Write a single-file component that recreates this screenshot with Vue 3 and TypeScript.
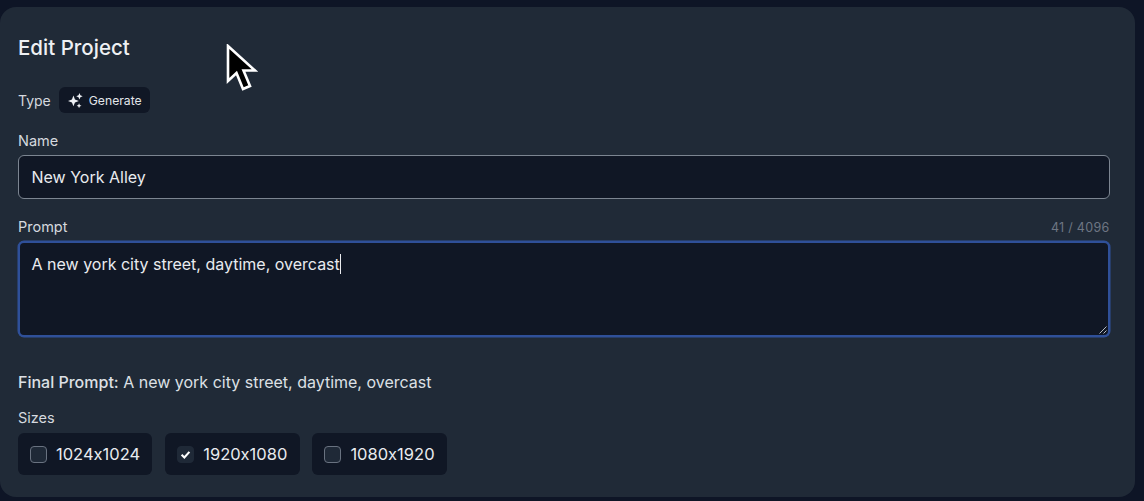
<script setup lang="ts">
const sizes: { label: string; checked: boolean }[] = [
  { label: '1024x1024', checked: false },
  { label: '1920x1080', checked: true },
  { label: '1080x1920', checked: false },
]
</script>

<template>
  <main class="page">
    <section class="panel">
      <h1 class="title">Edit Project</h1>
      <div class="type-row">
        <span class="type-label">Type</span>
        <span class="badge">
          <svg class="spark" viewBox="0 0 16 16" fill="#eef1f5">
            <path d="M5.8 2.6 7.4 6.8 11.6 8.4 7.4 10 5.8 14.2 4.2 10 0 8.4 4.2 6.8Z" />
            <path d="M12.2 0 13.2 2.4 15.6 3.4 13.2 4.4 12.2 6.8 11.2 4.4 8.8 3.4 11.2 2.4Z" />
            <path d="M11.8 11 12.6 12.8 14.4 13.6 12.6 14.4 11.8 16.2 11 14.4 9.2 13.6 11 12.8Z" />
          </svg>
          Generate
        </span>
      </div>

      <div class="label name-label">Name</div>
      <div class="input">New York Alley</div>

      <div class="prompt-head">
        <span class="label">Prompt</span>
        <span class="count">41 / 4096</span>
      </div>
      <div class="textarea">
        <span>A new york city street, daytime, overcast</span><span class="caret"></span>
        <svg class="grip" viewBox="0 0 8 8" fill="none" stroke="#c9ced6" stroke-width="0.9">
          <path d="M0.5 7.5 7.5 0.5M4.5 7.5 7.5 4.5" />
        </svg>
      </div>

      <p class="final"><strong>Final Prompt:</strong> A new york city street, daytime, overcast</p>

      <div class="label sizes-label">Sizes</div>
      <div class="sizes">
        <div v-for="size in sizes" :key="size.label" class="size">
          <span class="box" :class="{ checked: size.checked }">
            <svg v-if="size.checked" viewBox="0 0 16 16" fill="none" stroke="#fff" stroke-width="2.6">
              <path d="M3.2 8.4 6.6 11.6 12.8 4.8" />
            </svg>
          </span>
          <span>{{ size.label }}</span>
        </div>
      </div>
    </section>

    <svg class="cursor" viewBox="0 0 32 48" width="32" height="48">
      <path
        d="M2 2V37L10.5 29L17 45L24 42L17.5 26.5H29Z"
        fill="#000"
        stroke="#fff"
        stroke-width="2.6"
        stroke-linejoin="miter"
      />
    </svg>
  </main>
</template>

<style>
html,
body {
  margin: 0;
  background: #0e1526;
}
</style>

<style scoped>
.page {
  position: relative;
  width: 1144px;
  height: 501px;
  box-sizing: border-box;
  padding: 7px 9px 4px 0;
  overflow: hidden;
  font-family: Inter, "Noto Sans", sans-serif;
  font-feature-settings: "calt" 0;
  color: #e6e9ee;
}
.panel {
  height: 100%;
  box-sizing: border-box;
  padding: 27px 25.5px 0 18px;
  background: #202a37;
  border-radius: 16px;
}
.title {
  margin: 0;
  font-size: 20.5px;
  line-height: 27px;
  font-weight: 550;
  color: #eef0f3;
}
.type-row {
  display: flex;
  align-items: center;
  gap: 8px;
  margin-top: 26px;
  height: 26px;
}
.type-label {
  font-size: 14px;
  color: #d5d9df;
}
.badge {
  display: inline-flex;
  align-items: center;
  gap: 6px;
  height: 26px;
  padding: 0 8px 0 9px;
  background: #101725;
  border-radius: 6px;
  font-size: 12.2px;
  color: #e3e6ea;
}
.spark {
  width: 15px;
  height: 15px;
}
.label {
  font-size: 14.5px;
  line-height: 18px;
  color: #d5d9df;
}
.name-label {
  margin-top: 19px;
}
.input {
  display: flex;
  align-items: center;
  height: 44px;
  margin-top: 5px;
  box-sizing: border-box;
  padding: 0 12.5px;
  background: #101725;
  border: 1px solid #7c8591;
  border-radius: 6px;
  font-size: 16px;
  color: #e9ebef;
}
.prompt-head {
  display: flex;
  align-items: center;
  justify-content: space-between;
  margin-top: 19px;
}
.count {
  font-size: 12.5px;
  letter-spacing: 0.3px;
  color: #6e7683;
}
.textarea {
  position: relative;
  height: 96px;
  margin-top: 5px;
  box-sizing: border-box;
  padding: 11px 11.5px;
  background: #101725;
  border: 2px solid #2f5099;
  border-radius: 6px;
  box-shadow: 0 0 0 0.5px #2f5099;
  font-size: 16px;
  line-height: 20px;
  color: #e9ebef;
}
.caret {
  display: inline-block;
  width: 1px;
  height: 20px;
  background: #e9ebef;
  vertical-align: top;
}
.grip {
  position: absolute;
  right: 1px;
  bottom: 1px;
  width: 8px;
  height: 8px;
}
.final {
  margin: 35px 0 0;
  font-size: 16px;
  line-height: 20px;
  color: #dde0e5;
}
.final strong {
  font-weight: 500;
}
.sizes-label {
  margin-top: 17px;
}
.sizes {
  display: flex;
  gap: 12.8px;
  margin-top: 6px;
}
.size {
  display: flex;
  align-items: center;
  gap: 9px;
  width: 134.4px;
  height: 42px;
  box-sizing: border-box;
  padding: 0 12px;
  background: #101725;
  border-radius: 6px;
  font-size: 16.5px;
  color: #e9ebef;
}
.box {
  display: flex;
  flex: none;
  width: 17px;
  height: 17px;
  box-sizing: border-box;
  background: #1f2937;
  border: 1px solid #697280;
  border-radius: 4px;
}
.box.checked {
  border-color: #1f2937;
  padding: 1px;
}
.cursor {
  position: absolute;
  left: 226px;
  top: 44px;
}
</style>
